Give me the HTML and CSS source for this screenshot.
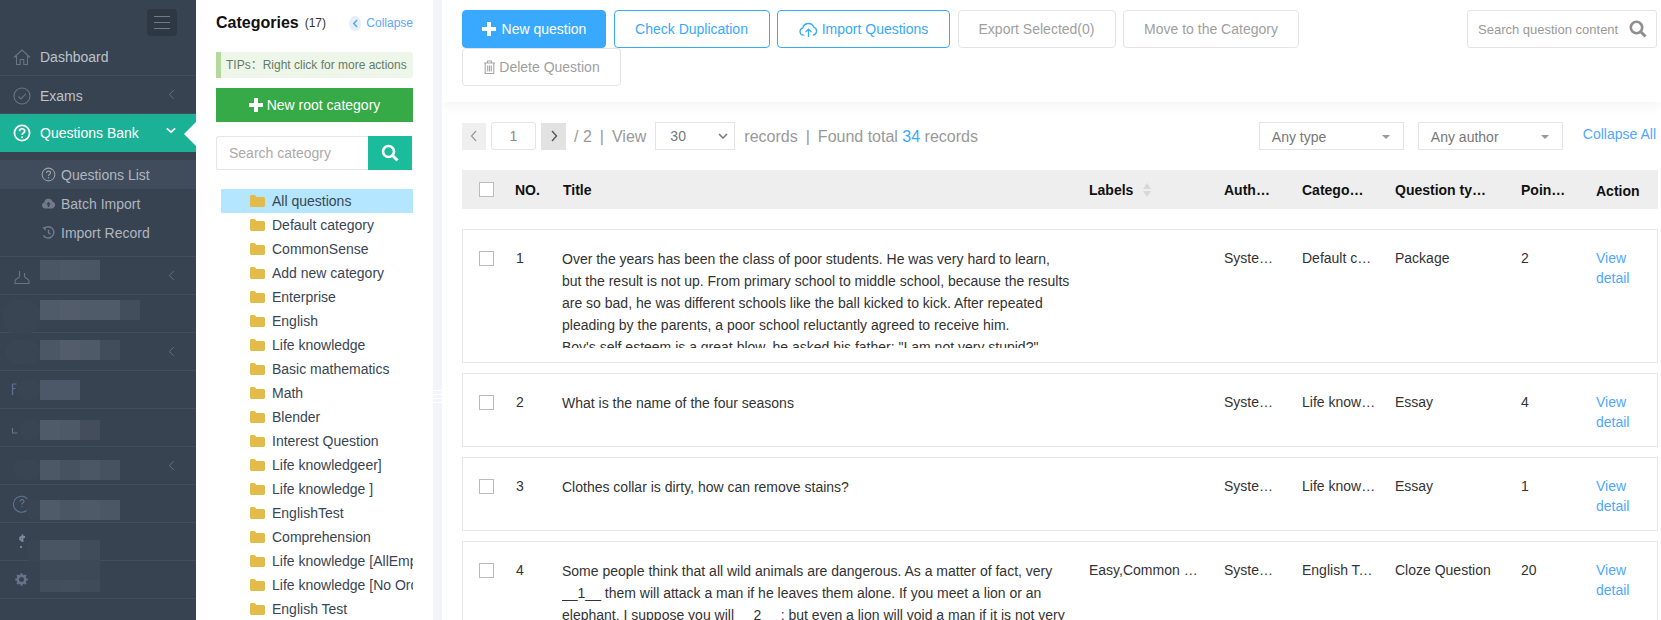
FILE: index.html
```html
<!DOCTYPE html>
<html lang="en">
<head>
<meta charset="utf-8">
<title>Questions List</title>
<link rel="stylesheet" href="styles.css">
</head>
<body>
<div class="app">
  <aside class="sidebar">
    <div class="side-top"><div class="burger"><i></i><i></i><i></i></div></div>
    <nav>
      <div class="nav-item">
        <svg class="nav-ico" viewBox="0 0 18 18"><path d="M1 9.500 9 2l8 7.500M3.500 8v8.500h3.700v-5h3.600v5h3.700V8" fill="none" stroke="#6a7583" stroke-width="1.100"/></svg>
        <span>Dashboard</span>
      </div>
      <div class="nav-item low">
        <svg class="nav-ico" viewBox="0 0 18 18"><circle cx="9" cy="9" r="8" fill="none" stroke="#6a7583" stroke-width="1.100"/><path d="m5.500 9.500 2.500 2.400 4.800-5" fill="none" stroke="#6a7583" stroke-width="1.100"/></svg>
        <span>Exams</span>
        <svg class="chev" viewBox="0 0 8 12"><path d="M6.500 1 1.500 6l5 5" fill="none" stroke="#687382" stroke-width="1.100"/></svg>
      </div>
      <div class="nav-item active">
        <svg class="nav-ico" viewBox="0 0 18 18"><circle cx="9" cy="9" r="7.600" fill="none" stroke="#fff" stroke-width="1.700"/><path d="M6.500 7.200c0-3.200 5.200-3.200 5.200-.2 0 2-2.600 2-2.600 4" fill="none" stroke="#fff" stroke-width="1.700"/><circle cx="9.100" cy="13.200" r="1" fill="#fff"/></svg>
        <span>Questions Bank</span>
        <svg class="chev-down" viewBox="0 0 12 8"><path d="m1 1.500 5 4.500 5-4.500" fill="none" stroke="#fff" stroke-width="2"/></svg>
        <b class="notch"></b>
      </div>
      <div class="submenu">
        <div class="sub-item current">
          <svg class="sub-ico" viewBox="0 0 16 16"><circle cx="8" cy="8" r="6.800" fill="none" stroke="#9aa3ae" stroke-width="1.100"/><path d="M5.900 6.400c0-2.700 4.300-2.700 4.300-.2 0 1.700-2.200 1.700-2.200 3.400" fill="none" stroke="#9aa3ae" stroke-width="1.200"/><circle cx="8" cy="11.400" r=".8" fill="#9aa3ae"/></svg>
          <span>Questions List</span>
        </div>
        <div class="sub-item">
          <svg class="sub-ico" viewBox="0 0 16 16"><path d="M4 13.200a3.200 3.200 0 0 1-.5-6.300A4.600 4.600 0 0 1 12.400 6 3.700 3.700 0 0 1 12 13.200z" fill="#727c89"/><path d="M8 6 5.400 9h1.700v2.600h1.800V9h1.700z" fill="#384351"/></svg>
          <span>Batch Import</span>
        </div>
        <div class="sub-item">
          <svg class="sub-ico" viewBox="0 0 16 16"><path d="M3.400 3.600A6 6 0 1 1 2.600 11" fill="none" stroke="#727c89" stroke-width="1.500"/><path d="M1.600 2.400 5.500 2 4.700 6z" fill="#727c89"/><path d="M8 5v3.400l2.300 1.400" fill="none" stroke="#727c89" stroke-width="1.400"/></svg>
          <span>Import Record</span>
        </div>
      </div>
      <div class="nav-item">
        <svg class="nav-ico" viewBox="0 0 18 18"><path d="M6.500 4v5.500c0 1.500-4.500 2-4.500 4.500v2.500h14V14c0-2.500-4.500-3-4.500-4.500V6" fill="none" stroke="#6a7583" stroke-width="1.100"/></svg>
        <svg class="chev" viewBox="0 0 8 12"><path d="M6.500 1 1.500 6l5 5" fill="none" stroke="#687382" stroke-width="1.100"/></svg>
      </div>
      <div class="nav-item"></div>
      <div class="nav-item">
        <svg class="chev" viewBox="0 0 8 12"><path d="M6.500 1 1.500 6l5 5" fill="none" stroke="#687382" stroke-width="1.100"/></svg>
      </div>
      <div class="nav-item"><svg class="nav-ico nudge" viewBox="0 0 18 18"><path d="M3.500 3h4M3.500 3v11M3.500 7.500h3" fill="none" stroke="#5b7391" stroke-width="1.200"/></svg></div>
      <div class="nav-item"><svg class="nav-ico nudge" viewBox="0 0 18 18"><path d="M3.500 9v5h5" fill="none" stroke="#6a7583" stroke-width="1.100"/></svg></div>
      <div class="nav-item">
        <svg class="chev" viewBox="0 0 8 12"><path d="M6.500 1 1.500 6l5 5" fill="none" stroke="#687382" stroke-width="1.100"/></svg>
      </div>
      <div class="nav-item"><svg class="nav-ico" viewBox="0 0 18 18"><path d="M14.500 4A8 8 0 1 0 13.500 15.500" fill="none" stroke="#5f7694" stroke-width="1.100"/><path d="M7 6.500c0-2.500 4-2.500 4-.2 0 1.500-2 1.500-2 3.200M9 11v1" fill="none" stroke="#5f7694" stroke-width="1.100"/></svg></div>
      <div class="nav-item"><svg class="nav-ico" viewBox="0 0 18 18"><path d="M12 4H8.500c-2 0-2 3 0 3h1.500M9.500 1.500V9M8 13v2" fill="none" stroke="#7c8ba0" stroke-width="1.800"/></svg></div>
      <div class="nav-item"><svg class="nav-ico gear" viewBox="0 0 18 18"><circle cx="9" cy="9" r="4.500" fill="none" stroke="#66748a" stroke-width="3"/><path d="M9 1.500v3M9 13.500v3M1.500 9h3M13.500 9h3M3.700 3.700l2.100 2.100M12.200 12.200l2.100 2.100M3.700 14.300l2.100-2.100M12.200 5.800l2.100-2.100" stroke="#66748a" stroke-width="2.600"/></svg></div>
    </nav>
    <svg class="redaction" viewBox="0 0 196 364" aria-hidden="true">
      <rect x="3" y="44" width="37" height="34" rx="14" fill="#3a4553"/>
      <rect x="5" y="84" width="35" height="24" rx="12" fill="#3a4553"/>
      <rect x="18" y="124" width="22" height="20" rx="8" fill="#3a4553"/>
      <rect x="20" y="164" width="20" height="20" rx="8" fill="#3a4553"/>
      <rect x="14" y="204" width="26" height="20" rx="8" fill="#3a4553"/>
      <rect x="27" y="244" width="14" height="20" rx="6" fill="#3a4553"/>
      <rect x="27" y="284" width="14" height="22" rx="6" fill="#3a4553"/>
      <g>
        <rect x="40" y="4" width="20" height="20" fill="#4b5665"/><rect x="60" y="4" width="20" height="20" fill="#4d5867"/><rect x="80" y="4" width="20" height="20" fill="#4b5665"/>
        <rect x="40" y="44" width="20" height="20" fill="#505b6a"/><rect x="60" y="44" width="20" height="20" fill="#525c6b"/><rect x="80" y="44" width="20" height="20" fill="#505b6a"/><rect x="100" y="44" width="20" height="20" fill="#505b6a"/><rect x="120" y="44" width="20" height="20" fill="#434e5d"/>
        <rect x="40" y="84" width="20" height="20" fill="#4c5766"/><rect x="60" y="84" width="20" height="20" fill="#525c6b"/><rect x="80" y="84" width="20" height="20" fill="#4f5a69"/><rect x="100" y="84" width="20" height="20" fill="#424d5b"/>
        <rect x="40" y="124" width="40" height="20" fill="#4c5767"/>
        <rect x="40" y="164" width="20" height="20" fill="#505b6a"/><rect x="60" y="164" width="20" height="20" fill="#4e5968"/><rect x="80" y="164" width="20" height="20" fill="#434d5b"/>
        <rect x="40" y="204" width="20" height="20" fill="#4d5867"/><rect x="60" y="204" width="20" height="20" fill="#475261"/><rect x="80" y="204" width="20" height="20" fill="#4c5766"/><rect x="100" y="204" width="20" height="20" fill="#475260"/>
        <rect x="40" y="244" width="20" height="20" fill="#505b6a"/><rect x="60" y="244" width="20" height="20" fill="#4b5665"/><rect x="80" y="244" width="20" height="20" fill="#4f5a69"/><rect x="100" y="244" width="20" height="20" fill="#4c5766"/>
        <rect x="40" y="284" width="20" height="20" fill="#4a5564"/><rect x="60" y="284" width="20" height="20" fill="#4a5564"/><rect x="80" y="284" width="20" height="20" fill="#414c5a"/>
        <rect x="40" y="304" width="60" height="20" fill="#3e4957"/>
        <rect x="40" y="324" width="20" height="12" fill="#434e5d"/><rect x="60" y="324" width="20" height="12" fill="#444f5e"/><rect x="80" y="324" width="20" height="12" fill="#404b59"/>
      </g>
    </svg>
  </aside>

  <section class="panel">
    <div class="panel-head">
      <h2>Categories</h2><span class="count">(17)</span>
      <span class="collapse-round"><svg viewBox="0 0 8 10"><path d="M5.800 1 2 5l3.800 4" fill="none" stroke="#5aa9ff" stroke-width="1.800"/></svg></span>
      <a class="collapse">Collapse</a>
    </div>
    <div class="tips">TIPs：Right click for more actions</div>
    <button class="root-btn"><svg viewBox="0 0 14 14"><path d="M7 0v14M0 7h14" stroke="#fff" stroke-width="4"/></svg>New root category</button>
    <div class="cat-search">
      <input type="text" placeholder="Search cateogry">
      <span class="cat-search-btn"><svg viewBox="0 0 18 18"><circle cx="7.500" cy="7.500" r="5.500" fill="none" stroke="#fff" stroke-width="2.600"/><path d="m11.500 11.500 5 5" stroke="#fff" stroke-width="3"/></svg></span>
    </div>
    <ul class="tree">
      <li class="selected"><svg viewBox="0 0 15 12"><path d="M0 1.500Q0 0 1.500 0h3.300L6.500 2h7Q15 2 15 3.500v7Q15 12 13.500 12h-12Q0 12 0 10.500z"/></svg><span>All questions</span></li>
      <li><svg viewBox="0 0 15 12"><path d="M0 1.500Q0 0 1.500 0h3.300L6.500 2h7Q15 2 15 3.500v7Q15 12 13.500 12h-12Q0 12 0 10.500z"/></svg><span>Default category</span></li>
      <li><svg viewBox="0 0 15 12"><path d="M0 1.500Q0 0 1.500 0h3.300L6.500 2h7Q15 2 15 3.500v7Q15 12 13.500 12h-12Q0 12 0 10.500z"/></svg><span>CommonSense</span></li>
      <li><svg viewBox="0 0 15 12"><path d="M0 1.500Q0 0 1.500 0h3.300L6.500 2h7Q15 2 15 3.500v7Q15 12 13.500 12h-12Q0 12 0 10.500z"/></svg><span>Add new category</span></li>
      <li><svg viewBox="0 0 15 12"><path d="M0 1.500Q0 0 1.500 0h3.300L6.500 2h7Q15 2 15 3.500v7Q15 12 13.500 12h-12Q0 12 0 10.500z"/></svg><span>Enterprise</span></li>
      <li><svg viewBox="0 0 15 12"><path d="M0 1.500Q0 0 1.500 0h3.300L6.500 2h7Q15 2 15 3.500v7Q15 12 13.500 12h-12Q0 12 0 10.500z"/></svg><span>English</span></li>
      <li><svg viewBox="0 0 15 12"><path d="M0 1.500Q0 0 1.500 0h3.300L6.500 2h7Q15 2 15 3.500v7Q15 12 13.500 12h-12Q0 12 0 10.500z"/></svg><span>Life knowledge</span></li>
      <li><svg viewBox="0 0 15 12"><path d="M0 1.500Q0 0 1.500 0h3.300L6.500 2h7Q15 2 15 3.500v7Q15 12 13.500 12h-12Q0 12 0 10.500z"/></svg><span>Basic mathematics</span></li>
      <li><svg viewBox="0 0 15 12"><path d="M0 1.500Q0 0 1.500 0h3.300L6.500 2h7Q15 2 15 3.500v7Q15 12 13.500 12h-12Q0 12 0 10.500z"/></svg><span>Math</span></li>
      <li><svg viewBox="0 0 15 12"><path d="M0 1.500Q0 0 1.500 0h3.300L6.500 2h7Q15 2 15 3.500v7Q15 12 13.500 12h-12Q0 12 0 10.500z"/></svg><span>Blender</span></li>
      <li><svg viewBox="0 0 15 12"><path d="M0 1.500Q0 0 1.500 0h3.300L6.500 2h7Q15 2 15 3.500v7Q15 12 13.500 12h-12Q0 12 0 10.500z"/></svg><span>Interest Question</span></li>
      <li><svg viewBox="0 0 15 12"><path d="M0 1.500Q0 0 1.500 0h3.300L6.500 2h7Q15 2 15 3.500v7Q15 12 13.500 12h-12Q0 12 0 10.500z"/></svg><span>Life knowledgeer]</span></li>
      <li><svg viewBox="0 0 15 12"><path d="M0 1.500Q0 0 1.500 0h3.300L6.500 2h7Q15 2 15 3.500v7Q15 12 13.500 12h-12Q0 12 0 10.500z"/></svg><span>Life knowledge ]</span></li>
      <li><svg viewBox="0 0 15 12"><path d="M0 1.500Q0 0 1.500 0h3.300L6.500 2h7Q15 2 15 3.500v7Q15 12 13.500 12h-12Q0 12 0 10.500z"/></svg><span>EnglishTest</span></li>
      <li><svg viewBox="0 0 15 12"><path d="M0 1.500Q0 0 1.500 0h3.300L6.500 2h7Q15 2 15 3.500v7Q15 12 13.500 12h-12Q0 12 0 10.500z"/></svg><span>Comprehension</span></li>
      <li><svg viewBox="0 0 15 12"><path d="M0 1.500Q0 0 1.500 0h3.300L6.500 2h7Q15 2 15 3.500v7Q15 12 13.500 12h-12Q0 12 0 10.500z"/></svg><span>Life knowledge [AllEmpty]</span></li>
      <li><svg viewBox="0 0 15 12"><path d="M0 1.500Q0 0 1.500 0h3.300L6.500 2h7Q15 2 15 3.500v7Q15 12 13.500 12h-12Q0 12 0 10.500z"/></svg><span>Life knowledge [No Order]</span></li>
      <li><svg viewBox="0 0 15 12"><path d="M0 1.500Q0 0 1.500 0h3.300L6.500 2h7Q15 2 15 3.500v7Q15 12 13.500 12h-12Q0 12 0 10.500z"/></svg><span>English Test</span></li>
    </ul>
  </section>

  <div class="gutter"><div class="handle"><i></i><i></i><i></i><i></i></div></div>

  <main class="main">
    <header class="toolbar">
      <div class="actions">
        <button class="btn primary w-new"><svg viewBox="0 0 14 14"><path d="M7 0v14M0 7h14" stroke="#fff" stroke-width="4"/></svg>New question</button>
        <button class="btn outline w-check">Check Duplication</button>
        <button class="btn outline w-import"><svg class="cloud" viewBox="0 0 20 18"><path d="M5.500 15H4.800A3.800 3.800 0 0 1 4 7.500 6 6 0 0 1 15.500 6.500 4.400 4.400 0 0 1 15 15h-.5" fill="none" stroke="#38a9ff" stroke-width="1.400"/><path d="M10 17V9M6.800 11.800 10 8.600l3.200 3.200" fill="none" stroke="#38a9ff" stroke-width="1.400"/></svg>Import Questions</button>
        <button class="btn muted w-export">Export Selected(0)</button>
        <button class="btn muted w-move">Move to the Category</button>
        <button class="btn muted w-delete"><svg class="trash" viewBox="0 0 13 15"><path d="M1 3h11M4.500 3V1h4v2M2.200 3v10.500h8.600V3M4.700 5.500v6M6.500 5.500v6M8.300 5.500v6" fill="none" stroke="#a5a5a5" stroke-width="1.100"/></svg>Delete Question</button>
      </div>
      <div class="q-search">
        <input type="text" placeholder="Search question content">
        <svg viewBox="0 0 18 18"><circle cx="7.500" cy="7.500" r="5.700" fill="none" stroke="#8f8f8f" stroke-width="2.600"/><path d="m11.500 11.500 5 5" stroke="#8f8f8f" stroke-width="3"/></svg>
      </div>
    </header>

    <div class="filters">
      <span class="page-btn"><svg viewBox="0 0 8 12"><path d="M6 1 1.500 6 6 11" fill="none" stroke="#999" stroke-width="1.200"/></svg></span>
      <input class="page-input" type="text" value="1">
      <span class="page-btn next"><svg viewBox="0 0 8 12"><path d="M2 1l4.500 5L2 11" fill="none" stroke="#555" stroke-width="1.400"/></svg></span>
      <span class="pg-text pg-total">/ 2<span class="sep">|</span>View</span>
      <div class="per-page"><span>30</span><svg viewBox="0 0 10 6"><path d="m1 1 4 4 4-4" fill="none" stroke="#777" stroke-width="1.500"/></svg></div>
      <span class="pg-text">records<span class="sep">|</span>Found total <em>34</em> records</span>
      <div class="right-filters">
        <div class="drop"><span>Any type</span><b></b></div>
        <div class="drop"><span>Any author</span><b></b></div>
        <a class="collapse-all">Collapse All</a>
      </div>
    </div>

    <div class="thead cols">
      <span class="check"></span>
      <span class="h-no">NO.</span>
      <span class="h-title">Title</span>
      <span class="labels">Labels<svg viewBox="0 0 8 14"><path d="M4 0 8 6H0zM4 14 0 8h8z" fill="#d8d8d8"/></svg></span>
      <span class="cut">Author</span>
      <span class="cut">Category</span>
      <span class="cut">Question type</span>
      <span class="cut">Points</span>
      <span class="act">Action</span>
    </div>

    <article class="row cols">
      <span class="check"></span>
      <span class="num">1</span>
      <div class="title">Over the years has been the class of poor students. He was very hard to learn, but the result is not up. From primary school to middle school, because the results are so bad, he was different schools like the ball kicked to kick. After repeated pleading by the parents, a poor school reluctantly agreed to receive him.<br>Boy's self esteem is a great blow, he asked his father: "I am not very stupid?"</div>
      <span class="cut"></span>
      <span class="cut">System admin</span>
      <span class="cut">Default category</span>
      <span class="cut">Package</span>
      <span class="cut">2</span>
      <a class="view">View detail</a>
    </article>
    <article class="row cols">
      <span class="check"></span>
      <span class="num">2</span>
      <div class="title">What is the name of the four seasons</div>
      <span class="cut"></span>
      <span class="cut">System admin</span>
      <span class="cut">Life knowledge</span>
      <span class="cut">Essay</span>
      <span class="cut">4</span>
      <a class="view">View detail</a>
    </article>
    <article class="row cols">
      <span class="check"></span>
      <span class="num">3</span>
      <div class="title">Clothes collar is dirty, how can remove stains?</div>
      <span class="cut"></span>
      <span class="cut">System admin</span>
      <span class="cut">Life knowledge</span>
      <span class="cut">Essay</span>
      <span class="cut">1</span>
      <a class="view">View detail</a>
    </article>
    <article class="row cols">
      <span class="check"></span>
      <span class="num">4</span>
      <div class="title">Some people think that all wild animals are dangerous. As a matter of fact, very __1__ them will attack a man if he leaves them alone. If you meet a lion or an elephant, I suppose you will __2__ ; but even a lion will void a man if it is not very</div>
      <span class="cut">Easy,Common Sense,English</span>
      <span class="cut">System admin</span>
      <span class="cut">English Test</span>
      <span class="cut">Cloze Question</span>
      <span class="cut">20</span>
      <a class="view">View detail</a>
    </article>
  </main>
</div>
</body>
</html>
```
FILE: styles.css
```css
* { box-sizing: border-box; }
html, body { margin: 0; height: 100%; overflow: hidden; }
body { font-family: "Liberation Sans", Arial, "Noto Sans CJK SC", sans-serif; font-size: 14px; color: #333; background: #fff; }
button, input { font-family: inherit; }
a { cursor: pointer; }

.app { display: flex; width: 1661px; height: 620px; overflow: hidden; }

/* Sidebar */
.sidebar { position: relative; flex: 0 0 196px; height: 620px; background: #384351; overflow: hidden; }
.side-top { height: 38px; display: flex; justify-content: flex-end; padding: 9px 19px 0 0; }
.burger { width: 30px; height: 27px; border-radius: 4px; background: #2e3845; display: flex; flex-direction: column; align-items: center; justify-content: center; gap: 5px; }
.burger i { display: block; width: 16px; height: 1px; background: #717b88; }
.nav-item { position: relative; display: flex; align-items: center; height: 38px; padding-left: 13px; color: #bcc3cc; border-bottom: 1px solid #434e5c; }
.nav-item.low { padding-top: 3px; }
.nav-item span { margin-left: 9px; white-space: nowrap; }
.nav-ico { width: 18px; height: 18px; flex: none; }
.nudge { margin-left: -4px; }
.gear { width: 15px; height: 15px; margin-left: 1px; }
.chev { position: absolute; left: 168px; top: 13px; width: 7px; height: 11px; }
.nav-item.active { background: #1bb196; color: #fff; border-bottom: 0; }
.chev-down { position: absolute; left: 166px; top: 13px; width: 10px; height: 7px; }
.notch { position: absolute; right: 0; top: 8px; width: 0; height: 0; border-style: solid; border-width: 12px 12px 12px 0; border-color: transparent #fff transparent transparent; }
.submenu { padding: 8px 0 9px; border-bottom: 1px solid #434e5c; }
.sub-item { display: flex; align-items: center; height: 29px; padding-left: 41px; color: #aeb6c0; }
.sub-item.current { background: #404b5b; }
.sub-ico { width: 15px; height: 15px; flex: none; margin-right: 5px; }
.redaction { position: absolute; left: 0; top: 256px; width: 196px; height: 364px; }

/* Categories panel */
.panel { flex: 0 0 237px; height: 620px; padding: 1px 20px 0; background: #fff; overflow: hidden; }
.panel-head { display: flex; align-items: center; height: 44px; white-space: nowrap; }
.panel-head h2 { margin: 0; font-size: 16px; font-weight: 700; color: #111; }
.count { margin-left: 6px; font-size: 12px; color: #333; }
.collapse-round { display: flex; align-items: center; justify-content: center; width: 15px; height: 15px; margin-left: 23px; border-radius: 50%; background: #e8eefb; }
.collapse-round svg { width: 7px; height: 9px; }
.collapse { margin-left: 5px; font-size: 12px; color: #5aa9ff; }
.tips { height: 26px; margin-top: 7px; padding-left: 5px; line-height: 26px; font-size: 12px; white-space: nowrap; color: #647c64; background: #eef6ea; border-left: 5px solid #b5d99c; border-radius: 0 3px 3px 0; }
.root-btn { display: flex; align-items: center; justify-content: center; width: 197px; height: 34px; margin-top: 10px; border: 0; background: #35aa47; color: #fff; font-size: 14px; }
.root-btn svg { width: 14px; height: 14px; margin-right: 4px; }
.cat-search { display: flex; width: 196px; height: 34px; margin-top: 14px; }
.cat-search input { width: 152px; height: 34px; padding: 0 12px; border: 1px solid #e5e5e5; border-right: 0; border-radius: 3px 0 0 3px; font-size: 14px; outline: 0; }
.cat-search input::placeholder { color: #aaa; opacity: 1; }
.cat-search-btn { display: flex; align-items: center; justify-content: center; width: 44px; height: 34px; background: #1abc9c; }
.cat-search-btn svg { width: 18px; height: 18px; }
.tree { list-style: none; margin: 19px 0 0; padding: 0 0 0 5px; width: 197px; }
.tree li { display: flex; align-items: center; height: 24px; padding-left: 29px; white-space: nowrap; overflow: hidden; color: #3a4553; }
.tree li svg { flex: none; width: 15px; height: 12px; margin-right: 7px; fill: #e3bb4b; }
.tree li.selected { background: #b5e6ff; }

.gutter { flex: 0 0 9px; height: 620px; background: #f3f4f9; padding-top: 390px; }
.handle { display: flex; flex-direction: column; gap: 3px; }
.handle i { display: block; height: 1px; background: #fff; }

/* Main */
.main { flex: 1; min-width: 0; height: 620px; overflow: hidden; background: #fff; }
.toolbar { display: flex; justify-content: space-between; align-items: flex-start; height: 102px; padding: 10px 4px 0 20px; box-shadow: 0 5px 10px rgba(0, 0, 0, .04); }
.actions { display: flex; flex-wrap: wrap; width: 850px; column-gap: 7.500px; }
.btn { display: flex; align-items: center; justify-content: center; height: 38px; padding: 0; border-radius: 4px; font-size: 14px; background: #fff; white-space: nowrap; }
.btn.primary { border: 1px solid #38a9ff; background: #38a9ff; color: #fff; }
.btn.primary svg { width: 14px; height: 14px; margin-right: 6px; }
.btn.outline { border: 1px solid #38a9ff; color: #38a9ff; }
.btn.muted { border: 1px solid #e4e4e4; color: #a0a0a0; }
.cloud { width: 19px; height: 17px; margin-right: 4px; }
.trash { width: 13px; height: 15px; margin-right: 3px; }
.w-new { width: 144px; }
.w-check { width: 156px; }
.w-import { width: 173px; }
.w-export { width: 158px; }
.w-move { width: 176px; }
.w-delete { width: 159px; }
.q-search { display: flex; align-items: center; width: 190px; height: 38px; padding: 0 9px 0 10px; border: 1px solid #e4e4e4; border-radius: 3px; }
.q-search input { flex: 1; min-width: 0; border: 0; padding: 0; font-size: 13px; outline: 0; }
.q-search input::placeholder { color: #999; opacity: 1; }
.q-search svg { flex: none; width: 18px; height: 18px; }

.filters { display: flex; align-items: center; height: 28px; margin-top: 20px; padding: 0 5px 0 20px; color: #999; font-size: 16px; white-space: nowrap; }
.page-btn { display: flex; align-items: center; justify-content: center; width: 24px; height: 27px; background: #efefef; }
.page-btn svg { width: 8px; height: 12px; }
.page-btn.next { width: 25px; background: #e2e2e2; }
.page-input { width: 45px; height: 28px; margin: 0 5px; padding: 0; text-align: center; border: 1px solid #e4e4e4; border-radius: 3px; font-size: 14px; color: #888; outline: 0; }
.pg-text { display: inline-block; padding-top: 1px; }
.pg-text em { font-style: normal; color: #38a9ff; }
.sep { margin: 0 8px; }
.pg-total { margin-left: 8px; margin-right: 9px; }
.per-page { display: flex; align-items: center; justify-content: space-between; width: 80px; height: 28px; margin-right: 9px; padding: 0 6px 0 14px; border: 1px solid #e4e4e4; font-size: 14px; color: #777; }
.per-page svg { width: 10px; height: 6px; }
.right-filters { display: flex; align-items: center; margin-left: auto; }
.drop { display: flex; align-items: center; justify-content: space-between; width: 145px; height: 28px; margin-right: 14px; padding: 1px 13px 0 12px; border: 1px solid #e4e4e4; font-size: 14px; color: #777; }
.drop b { width: 0; height: 0; border-style: solid; border-width: 4px 4px 0; border-color: #999 transparent transparent; }
.drop:nth-child(2) { margin-right: 20px; }
.collapse-all { position: relative; top: -2px; font-size: 14px; color: #4ea8ff; }

/* Table */
.cols { display: grid; grid-template-columns: 37px 46px 527px 135px 78px 93px 126px 75px 1fr; }
.thead { width: 1196px; height: 39px; margin: 20px 0 0 20px; padding-left: 17px; align-items: center; background: #eee; font-weight: 700; color: #111; }
.cut { display: block; padding-right: 19px; white-space: nowrap; overflow: hidden; text-overflow: ellipsis; }
.thead .cut { padding-right: 29.500px; }
.thead .cut::after { content: ""; display: inline-block; width: 20px; }
.h-no { margin-left: -1px; }
.h-title { margin-left: 1px; }
.labels { display: flex; align-items: center; }
.labels svg { width: 8px; height: 14px; margin-left: 10px; }
.act { padding-top: 2px; }
.check { display: block; width: 15px; height: 15px; background: #fff; border: 1px solid #bbb; }
.row { width: 1196px; min-height: 74px; margin: 10px 0 0 20px; padding: 18px 0 14px 16px; border: 1px solid #e6e6e6; line-height: 20px; color: #333; }
.thead + .row { margin-top: 20px; }
.row .check { margin-top: 3px; }
.num { line-height: 20px; }
.title { max-height: 100px; padding-right: 17px; line-height: 22px; overflow: hidden; }
.view { color: #4ea8ff; width: 50px; }
```
